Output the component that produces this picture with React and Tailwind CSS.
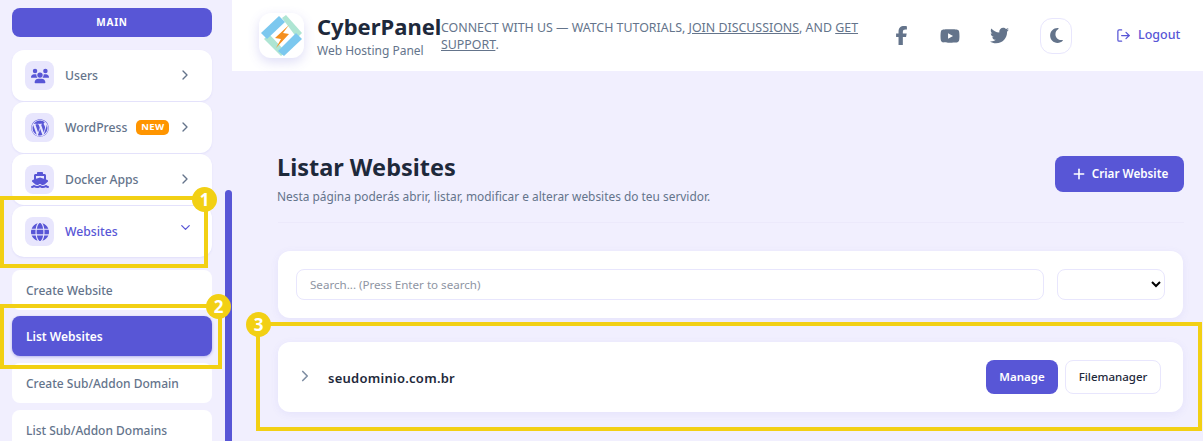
import React from 'react';
import { ChevronRight, ChevronDown, LogOut, Plus } from 'lucide-react';
import { FaUsers, FaWordpress, FaShip, FaGlobe, FaFacebookF, FaYoutube, FaTwitter, FaMoon } from 'react-icons/fa6';

function Logo() {
  return (
    <div className="w-[45px] h-[45px] bg-white rounded-xl shadow-[0_4px_12px_rgba(88,86,214,0.2)] shrink-0">
      <svg width="45" height="45" viewBox="0 0 45 45">
        <polygon points="23,5 27,2 43,20 38,25" fill="#aee5d3" />
        <polygon points="5,26 10,21 27,39 22,43" fill="#aee5d3" />
        <polygon points="2,20 20,3 26,9 8,26" fill="#7cc8ef" />
        <polygon points="19,38 37,20 43,26 25,43" fill="#7cc8ef" />
        <polygon points="30,12 16,25 22,26 17,35 30,21 24,20" fill="#f58f1e" />
      </svg>
    </div>
  );
}

function MenuItem({ icon, label, badge, open, className }) {
  return (
    <div className={`h-[51px] mx-3 w-[200px] bg-white rounded-xl shadow-[0_1px_2px_rgba(88,86,214,0.1)] flex items-center pl-[13px] shrink-0 ${className || ''}`}>
      <div className="w-[29px] h-[29px] rounded-lg bg-[#e8e6fd] flex items-center justify-center text-[#5856d6] text-[18px]">
        {icon}
      </div>
      <span className={`ml-[11px] pt-[2px] text-[12.2px] font-medium ${open ? 'text-[#5856d6]' : 'text-[#64748b]'}`}>{label}</span>
      {badge && (
        <span className="ml-[9px] h-[15px] w-[33px] rounded-[5px] bg-[#ff9500] text-white text-[9.5px] font-bold tracking-[0.03em] flex items-center justify-center">{badge}</span>
      )}
      <span className="ml-auto mr-[19px] text-[#64748b]">
        {open ? <ChevronDown size={15} className="text-[#5856d6] -mt-2" /> : <ChevronRight size={16} className="-mt-0.5" />}
      </span>
    </div>
  );
}

function SubItem({ label, active, className }) {
  return (
    <div className={`h-[40px] mx-3 w-[200px] rounded-lg flex items-center pl-[14px] pt-px text-[12px] shrink-0 ${active ? 'bg-[#5856d6] text-white font-semibold shadow-[0_1px_3px_rgba(88,86,214,0.4)]' : 'bg-white text-[#64748b] font-medium'} ${className || ''}`}>
      {label}
    </div>
  );
}

function Sidebar() {
  return (
    <aside className="w-[232px] shrink-0 h-[441px] overflow-hidden relative flex flex-col pt-2">
      <div className="mx-3 w-[200px] h-[29px] rounded-lg bg-[#5856d6] text-white text-[10px] font-bold tracking-[0.08em] flex items-center justify-center shrink-0 mb-[13px]">MAIN</div>
      <MenuItem icon={<FaUsers />} label="Users" />
      <MenuItem icon={<FaWordpress />} label="WordPress" badge="NEW" className="mt-px" />
      <MenuItem icon={<FaShip />} label="Docker Apps" className="mt-px" />
      <MenuItem icon={<FaGlobe />} label="Websites" open className="mt-px" />
      <SubItem label="Create Website" className="mt-[13px]" />
      <SubItem label="List Websites" active className="mt-[6px]" />
      <SubItem label="Create Sub/Addon Domain" className="mt-[7px]" />
      <SubItem label="List Sub/Addon Domains" className="mt-[7px]" />
      <div className="absolute left-[225px] top-[190px] w-[7px] h-[260px] rounded-t bg-[#5856d6]" />
    </aside>
  );
}

function Header() {
  return (
    <header className="h-[71px] bg-white flex items-center pl-[27px] shrink-0">
      <Logo />
      <div className="ml-[13px] w-[124px] shrink-0 text-[#1e293b]">
        <div className="text-[22px] leading-[26px] font-bold whitespace-nowrap">CyberPanel</div>
        <div className="text-[12px] leading-[16px] text-[#64748b] mt-[4px]">Web Hosting Panel</div>
      </div>
      <p className="w-[425px] shrink-0 text-[12.4px] leading-[17px] text-[#64748b]">
        CONNECT WITH US — WATCH TUTORIALS, <u>JOIN DISCUSSIONS</u>, AND <u>GET SUPPORT</u>.
      </p>
      <FaFacebookF className="ml-[26px] text-[#64748b] text-[19px]" />
      <FaYoutube className="ml-[29px] text-[#64748b] text-[20px]" />
      <FaTwitter className="ml-[30px] text-[#64748b] text-[19px]" />
      <div className="ml-[31px] w-[32px] h-[36px] rounded-xl border border-[#e8e6fd] flex items-center justify-center text-[#64748b] text-[17px]">
        <FaMoon />
      </div>
      <div className="ml-[44px] flex items-center gap-[7px] text-[#5856d6] text-[12.5px] font-medium">
        <LogOut size={15} />
        Logout
      </div>
    </header>
  );
}

function Main() {
  return (
    <main className="pr-[20px] pl-[46px] pt-[85px]">
      <div className="flex justify-between items-start pb-[18px] border-b border-[#ece9fb] -mr-px">
        <div className="-ml-px">
          <h1 className="text-[23.5px] leading-[24px] font-bold text-[#1e293b] mt-[-1px]">Listar Websites</h1>
          <p className="text-[11.9px] leading-[16px] text-[#64748b] mt-[9px]">Nesta página poderás abrir, listar, modificar e alterar websites do teu servidor.</p>
        </div>
        <button className="h-[36px] w-[129px] rounded-lg bg-[#5856d6] text-white text-[11.7px] font-semibold flex items-center justify-center gap-[5px]">
          <Plus size={16} strokeWidth={2.4} />
          Criar Website
        </button>
      </div>
      <div className="mt-[28px] h-[67px] bg-white rounded-xl shadow-[0_2px_8px_rgba(88,86,214,0.08)] flex items-center pl-[18px] pr-[18px] gap-[13px]">
        <input
          className="h-[31px] flex-1 rounded-lg border border-[#e8e6fd] px-[13px] text-[11.6px] placeholder:text-[#8e95a3] outline-none"
          placeholder="Search... (Press Enter to search)"
          readOnly
        />
        <select className="h-[31px] w-[108px] rounded-lg border border-[#e8e6fd] bg-white text-[12px]" />
      </div>
      <div className="mt-[24px] h-[70px] bg-white rounded-xl shadow-[0_2px_8px_rgba(88,86,214,0.08)] flex items-center pl-[18px] pr-[22px]">
        <ChevronRight size={18} strokeWidth={2.2} className="text-[#7f8ea3] -mt-0.5" />
        <span className="ml-[14px] pt-[3px] text-[13px] font-semibold text-[#1e293b] tracking-[0.02em]">seudominio.com.br</span>
        <button className="ml-auto h-[34px] w-[72px] rounded-lg bg-[#5856d6] text-white text-[11.5px] font-semibold">Manage</button>
        <button className="ml-[7px] h-[34px] w-[96px] rounded-lg bg-white border border-[#e8e6fd] text-[#1e293b] text-[11.5px] font-medium">Filemanager</button>
      </div>
    </main>
  );
}

function Marker({ n, className }) {
  return (
    <div className={`absolute w-[25px] h-[25px] rounded-full bg-[#f2d014] text-white text-[17px] font-bold flex items-center justify-center ${className}`}>{n}</div>
  );
}

export default function App() {
  return (
    <div className="w-[1203px] h-[441px] overflow-hidden bg-[#f1effe] flex relative font-['Noto_Sans',sans-serif]">
      <Sidebar />
      <div className="flex-1 min-w-0">
        <Header />
        <Main />
      </div>
      {/* yellow callouts on top of the screenshot */}
      <div className="absolute left-0 top-[196px] w-[208px] h-[72px] border-[4px] border-[#f2d014]" />
      <Marker n="1" className="left-[192px] top-[187px]" />
      <div className="absolute left-0 top-[304px] w-[222px] h-[65px] border-[4px] border-[#f2d014]" />
      <Marker n="2" className="left-[206px] top-[294px]" />
      <div className="absolute left-[256px] top-[322px] w-[946px] h-[109px] border-[4px] border-[#f2d014]" />
      <Marker n="3" className="left-[246px] top-[312px]" />
    </div>
  );
}
